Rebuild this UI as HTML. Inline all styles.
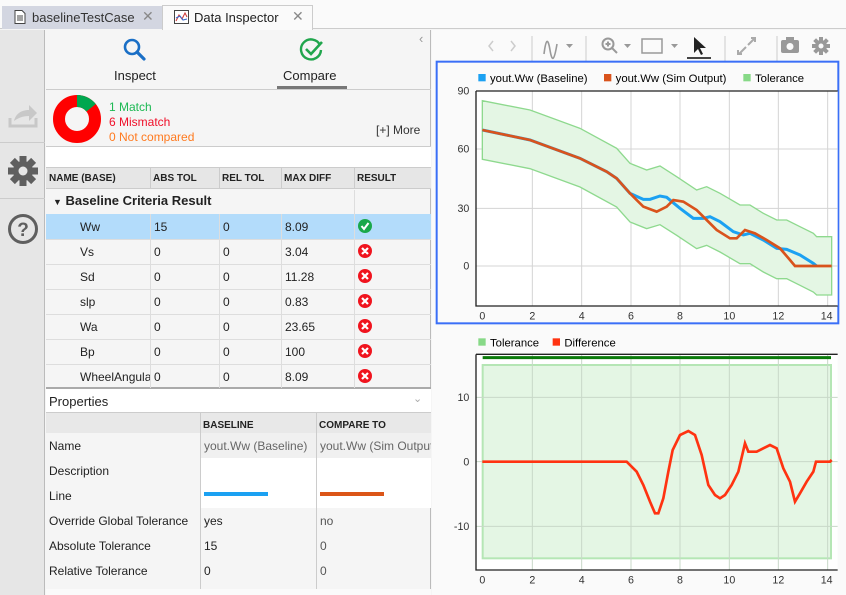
<!DOCTYPE html>
<html><head><meta charset="utf-8"><style>
*{box-sizing:border-box;margin:0;padding:0}
body{width:846px;height:595px;overflow:hidden;background:#f5f5f5;font-family:"Liberation Sans",Arial,sans-serif;font-size:12px;color:#222;position:relative}
.a{position:absolute}
.tb{top:0;left:0;width:846px;height:29px;background:#fafafa;border-bottom:1px solid #ccc}
.c{position:absolute;white-space:nowrap;overflow:hidden}
</style></head><body>
<div class="a tb"></div>
<div class="a" style="left:2px;top:6px;width:160px;height:23px;background:#d3d6e1"></div>
<div class="a" style="left:162px;top:5px;width:151px;height:25px;background:#fafafa;border:1px solid #ccc;border-bottom:none"></div>
<svg class="a" style="left:14px;top:10px" width="12" height="14"><path d="M1 .5h7l3 3v10H1z" fill="#fff" stroke="#444"/><path d="M3 6h6M3 8h6M3 10h6" stroke="#444"/></svg>
<div class="a" style="left:32px;top:10px;font-size:13px;color:#333">baselineTestCase</div>
<div class="a" style="left:142px;top:8px;font-size:14px;color:#888">✕</div>
<svg class="a" style="left:174px;top:10px" width="15" height="14"><rect x=".5" y=".5" width="14" height="13" fill="#fff" stroke="#444"/><path d="M2 11 5 5 8 9 11 3 13 7" fill="none" stroke="#c33"/><path d="M2 8 6 6 9 10 13 9" fill="none" stroke="#36c"/></svg>
<div class="a" style="left:194px;top:10px;font-size:13px;color:#222">Data Inspector</div>
<div class="a" style="left:292px;top:8px;font-size:14px;color:#888">✕</div>

<!-- left strip -->
<div class="a" style="left:0;top:30px;width:45px;height:565px;background:#e6e6e6;border-right:1px solid #bbb"></div>
<div class="a" style="left:0;top:142px;width:45px;height:1px;background:#ccc"></div>
<div class="a" style="left:0;top:198px;width:45px;height:1px;background:#ccc"></div>
<svg class="a" style="left:8px;top:101px" width="32" height="28"><path d="M2 17v8h26v-8" fill="none" stroke="#c8c8c8" stroke-width="3"/><path d="M6 20c2-8 8-11 15-11V4l8 8-8 8v-5c-6 0-11 2-15 5z" fill="#c8c8c8"/></svg>
<svg class="a" style="left:7px;top:155px" width="32" height="32" viewBox="-16 -16 32 32"><g fill="#5f5f5f"><circle r="10"/><rect x="-3.5" y="-15" width="7" height="30"/><rect x="-3.5" y="-15" width="7" height="30" transform="rotate(45)"/><rect x="-3.5" y="-15" width="7" height="30" transform="rotate(90)"/><rect x="-3.5" y="-15" width="7" height="30" transform="rotate(135)"/></g><circle r="4.5" fill="#e6e6e6"/></svg>
<svg class="a" style="left:7px;top:213px" width="32" height="32"><circle cx="16" cy="16" r="13.5" fill="none" stroke="#5f5f5f" stroke-width="3"/><text x="16" y="23" text-anchor="middle" font-size="19" font-weight="bold" fill="#5f5f5f" font-family="Liberation Sans">?</text></svg>

<!-- main left panel -->
<div class="a" style="left:46px;top:30px;width:385px;height:565px;background:#f5f5f5;border-right:1px solid #bbb"></div>
<div class="a" style="left:419px;top:31px;color:#999;font-size:13px">‹</div>
<svg class="a" style="left:122px;top:37px" width="26" height="26"><circle cx="10" cy="10" r="7" fill="none" stroke="#1a6fc6" stroke-width="2.6"/><path d="M15 15l7 7" stroke="#1a6fc6" stroke-width="3.2" stroke-linecap="round"/></svg>
<div class="a" style="left:114px;top:68px;font-size:13px">Inspect</div>
<svg class="a" style="left:299px;top:37px" width="26" height="26"><path d="M21 8A10 10 0 1 0 22 13" fill="none" stroke="#21a64d" stroke-width="2.4"/><path d="M7 12l5 5 11-12" fill="none" stroke="#21a64d" stroke-width="2.6"/></svg>
<div class="a" style="left:283px;top:68px;font-size:13px">Compare</div>
<div class="a" style="left:277px;top:86px;width:70px;height:3px;background:#777"></div>
<div class="a" style="left:46px;top:89px;width:385px;height:1px;background:#ccc"></div>
<svg class="a" style="left:53px;top:95px" width="48" height="48" viewBox="-24 -24 48 48"><circle r="18" fill="none" stroke="#f00" stroke-width="12"/><path d="M0-24A24 24 0 0 1 18.8-15V-15L9.4-7.5A12 12 0 0 0 0-12z" fill="#00a74f"/></svg>
<div class="a" style="left:109px;top:100px;color:#1db954">1 Match</div>
<div class="a" style="left:109px;top:115px;color:#f0102a">6 Mismatch</div>
<div class="a" style="left:109px;top:130px;color:#ff7a1f">0 Not compared</div>
<div class="a" style="left:376px;top:123px;color:#333">[+] More</div>
<div class="a" style="left:46px;top:146px;width:385px;height:22px;background:#fff;border-top:1px solid #ccc;border-bottom:1px solid #ccc"></div>
<div class="a" style="left:46px;top:168px;width:385px;height:21px;background:#e6e6e6;border-bottom:1px solid #ccc;font-size:10px;font-weight:bold;color:#222">
<div class="c" style="left:3px;top:5px">NAME (BASE)</div><div class="c" style="left:107px;top:5px">ABS TOL</div><div class="c" style="left:176px;top:5px">REL TOL</div><div class="c" style="left:238px;top:5px">MAX DIFF</div><div class="c" style="left:311px;top:5px">RESULT</div>
<div class="a" style="left:104px;top:0;width:1px;height:21px;background:#ccc"></div><div class="a" style="left:173px;top:0;width:1px;height:21px;background:#ccc"></div><div class="a" style="left:235px;top:0;width:1px;height:21px;background:#ccc"></div><div class="a" style="left:308px;top:0;width:1px;height:21px;background:#ccc"></div>
</div>
<div class="a" style="left:53px;top:193px;font-size:13px;font-weight:bold;color:#222"><span style="font-size:9px">▼</span> Baseline Criteria Result</div>
<div class="a" style="left:354px;top:190px;width:1px;height:24px;background:#ddd"></div>
<div id="rows"></div>
<div class="a" style="left:46px;top:387px;width:385px;height:2px;background:#aaa"></div>
<div class="a" style="left:46px;top:389px;width:385px;height:24px;background:#fff;border-bottom:1px solid #ccc"></div>
<div class="a" style="left:49px;top:394px;font-size:13px;color:#222">Properties</div>
<div class="a" style="left:413px;top:392px;color:#aaa;font-size:11px">⌄</div>
<div class="a" style="left:46px;top:413px;width:385px;height:20px;background:#e8e8e8"></div>
<div class="a" style="left:203px;top:420px;font-size:10px;font-weight:bold">BASELINE</div>
<div class="a" style="left:319px;top:420px;font-size:10px;font-weight:bold">COMPARE TO</div>
<div class="a" style="left:200px;top:433px;width:231px;height:25px;background:#f0f0f0"></div>
<div class="a" style="left:200px;top:458px;width:231px;height:50px;background:#fff"></div>
<div class="a" style="left:200px;top:413px;width:1px;height:182px;background:#ccc"></div>
<div class="a" style="left:316px;top:413px;width:1px;height:182px;background:#ccc"></div>
<div class="a" style="left:49px;top:439px">Name</div><div class="a" style="left:204px;top:439px;color:#666">yout.Ww (Baseline)</div><div class="c" style="left:320px;top:439px;width:111px;color:#666">yout.Ww (Sim Output)</div>
<div class="a" style="left:49px;top:464px">Description</div>
<div class="a" style="left:49px;top:489px">Line</div>
<div class="a" style="left:204px;top:492px;width:64px;height:4px;background:#1ba1f2"></div>
<div class="a" style="left:320px;top:492px;width:64px;height:4px;background:#db5518"></div>
<div class="a" style="left:49px;top:514px">Override Global Tolerance</div><div class="a" style="left:204px;top:514px">yes</div><div class="a" style="left:320px;top:514px;color:#555">no</div>
<div class="a" style="left:49px;top:539px">Absolute Tolerance</div><div class="a" style="left:204px;top:539px">15</div><div class="a" style="left:320px;top:539px;color:#555">0</div>
<div class="a" style="left:49px;top:564px">Relative Tolerance</div><div class="a" style="left:204px;top:564px">0</div><div class="a" style="left:320px;top:564px;color:#555">0</div>
<div class="a" style="left:46px;top:589px;width:385px;height:6px;background:#fafafa"></div>

<!-- right toolbar -->
<div class="a" style="left:432px;top:30px;width:414px;height:565px;background:#fafafa"></div>
<svg class="a" style="left:432px;top:30px" width="414" height="32" font-family="Liberation Sans">
<path d="M61 11l-4 5 4 5M79 11l4 5-4 5" fill="none" stroke="#ccc" stroke-width="1.5"/>
<path d="M100 6v26M154 6v26M293 6v26M345 6v26" stroke="#ccc"/>
<path d="M112 24c2-16 4-16 6-4s4 12 7-6" fill="none" stroke="#999" stroke-width="1.6"/><path d="M134 14h7l-3.5 4z" fill="#999"/>
<circle cx="176" cy="14" r="5.5" fill="none" stroke="#999" stroke-width="2"/><path d="M180 18l5 5M173.5 14h5M176 11.5v5" stroke="#999" stroke-width="2"/><path d="M192 14h7l-3.5 4z" fill="#999"/>
<rect x="210" y="9" width="20" height="14" fill="none" stroke="#999" stroke-width="1.5"/><path d="M239 14h7l-3.5 4z" fill="#999"/>
<path d="M262 7v16l4-4 3 6 2-1-3-6h6z" fill="#222"/><rect x="255" y="27" width="24" height="2" fill="#444"/>
<path d="M307 24l7-7M310 24h-4v-4M323 8l-7 7M319 8h4v4" fill="none" stroke="#aaa" stroke-width="2"/>
<rect x="349" y="10" width="18" height="13" rx="2" fill="#999"/><rect x="354" y="7" width="8" height="4" fill="#999"/><circle cx="358" cy="16.5" r="3.5" fill="#fafafa"/>
<g transform="translate(389,16)" fill="#999"><circle r="6"/><rect x="-2" y="-9" width="4" height="18"/><rect x="-2" y="-9" width="4" height="18" transform="rotate(45)"/><rect x="-2" y="-9" width="4" height="18" transform="rotate(90)"/><rect x="-2" y="-9" width="4" height="18" transform="rotate(135)"/><circle r="2.5" fill="#fafafa"/></g>
</svg>

<!-- plots -->
<svg class="a" style="left:0;top:0" width="846" height="595">
<g transform="translate(430,60) scale(0.33333)" font-family="Liberation Sans" font-size="32">
<rect x="20" y="5" width="1205" height="785" fill="#fafafa" stroke="#3a6ff7" stroke-width="6"/>
<rect x="138" y="93" width="1085" height="645" fill="#fff"/>
<g stroke="#d4d4d4" stroke-width="3"><path d="M307 93v645M455 93v645M603 93v645M750 93v645M898 93v645M1045 93v645M1193 93v645M138 267h1085M138 445h1085M138 618h1085"/></g>
<path d="M157 122L300 150L450 205L560 265L600 310L650 330L690 318L740 350L800 390L830 380L870 400L930 435L960 435L1000 460L1040 480L1070 480L1110 500L1150 520L1160 530L1205 530L1205 705L1160 705L1150 696L1110 676L1070 656L1040 656L1000 636L960 611L930 611L870 576L830 556L800 566L740 526L690 494L650 506L600 486L560 441L450 381L300 326L157 298Z" fill="#e4f6e4" stroke="#8ed98e" stroke-width="4"/>
<path d="M157 210L300 240L450 295L530 335L560 355L600 400L640 418L660 418L690 408L710 412L750 445L790 475L820 475L840 470L870 485L910 515L940 525L960 520L1000 540L1040 565L1070 568L1110 585L1150 610L1160 618" fill="none" stroke="#1ba1f2" stroke-width="9"/>
<path d="M157 210L300 240L450 295L530 335L560 355L600 400L640 440L680 455L710 440L730 420L760 425L800 450L830 480L860 510L900 535L920 535L945 510L975 520L1010 540L1050 565L1080 600L1095 618L1205 618" fill="none" stroke="#d9531c" stroke-width="8"/>
<path d="M138 93v645h1085M138 93h1085" fill="none" stroke="#222" stroke-width="4"/>
<g text-anchor="end" fill="#333"><text x="118" y="104">90</text><text x="118" y="278">60</text><text x="118" y="456">30</text><text x="118" y="629">0</text></g>
<g text-anchor="middle" fill="#333"><text x="157" y="778">0</text><text x="307" y="778">2</text><text x="455" y="778">4</text><text x="603" y="778">6</text><text x="750" y="778">8</text><text x="898" y="778">10</text><text x="1045" y="778">12</text><text x="1190" y="778">14</text></g>
<rect x="145" y="42" width="22" height="22" fill="#1ba1f2"/><text x="180" y="66" font-size="34">yout.Ww (Baseline)</text>
<rect x="522" y="42" width="22" height="22" fill="#d9531c"/><text x="557" y="66" font-size="34">yout.Ww (Sim Output)</text>
<rect x="940" y="42" width="22" height="22" fill="#87d987"/><text x="975" y="66" font-size="34">Tolerance</text>
</g>
<g transform="translate(430,325) scale(0.33333)" font-family="Liberation Sans" font-size="32">
<rect x="138" y="88" width="1085" height="647" fill="#fff"/>
<rect x="158" y="120" width="1045" height="580" fill="#e4f6e4" stroke="#b5e6b5" stroke-width="6"/>
<g stroke="#c8d8c8" stroke-width="3"><path d="M307 88v647M455 88v647M603 88v647M750 88v647M898 88v647M1045 88v647M1193 88v647M138 217h1085M138 410h1085M138 604h1085"/></g>
<path d="M158 98H1203" stroke="#0a7a0a" stroke-width="9"/>
<path d="M157 410L590 410L620 440L640 480L660 530L675 565L685 565L700 520L715 440L728 375L750 330L775 318L795 330L815 390L835 480L855 510L870 520L885 510L905 480L925 440L945 355L955 380L980 380L1000 370L1020 360L1040 370L1060 430L1080 470L1095 530L1110 505L1130 470L1150 440L1158 410L1200 410L1205 405" fill="none" stroke="#ff3311" stroke-width="8"/>
<path d="M138 88v647h1085M138 88h1085" fill="none" stroke="#222" stroke-width="4"/>
<g text-anchor="end" fill="#333"><text x="118" y="228">10</text><text x="118" y="421">0</text><text x="118" y="615">-10</text></g>
<g text-anchor="middle" fill="#333"><text x="157" y="775">0</text><text x="307" y="775">2</text><text x="455" y="775">4</text><text x="603" y="775">6</text><text x="750" y="775">8</text><text x="898" y="775">10</text><text x="1045" y="775">12</text><text x="1190" y="775">14</text></g>
<rect x="145" y="40" width="22" height="22" fill="#87d987"/><text x="180" y="64" font-size="34">Tolerance</text>
<rect x="368" y="40" width="22" height="22" fill="#ff3311"/><text x="403" y="64" font-size="34">Difference</text>
</g>
</svg>

<!-- table rows -->
<div class="a" style="left:46px;top:214px;width:385px;height:174px;font-size:12px">
<div class="a" style="left:0;top:0;width:385px;height:25px;background:#b3dcfb"></div>
<div class="a" style="left:0;top:25px;width:385px;height:1px;background:#ddd"></div><div class="a" style="left:0;top:50px;width:385px;height:1px;background:#ddd"></div><div class="a" style="left:0;top:75px;width:385px;height:1px;background:#ddd"></div><div class="a" style="left:0;top:100px;width:385px;height:1px;background:#ddd"></div><div class="a" style="left:0;top:125px;width:385px;height:1px;background:#ddd"></div><div class="a" style="left:0;top:150px;width:385px;height:1px;background:#ddd"></div>
<div class="a" style="left:104px;top:0;width:1px;height:174px;background:#ddd"></div><div class="a" style="left:173px;top:0;width:1px;height:174px;background:#ddd"></div><div class="a" style="left:235px;top:0;width:1px;height:174px;background:#ddd"></div><div class="a" style="left:308px;top:0;width:1px;height:174px;background:#ddd"></div>
<div class="c" style="left:34px;top:6px">Ww</div><div class="c" style="left:108px;top:6px">15</div><div class="c" style="left:177px;top:6px">0</div><div class="c" style="left:239px;top:6px">8.09</div>
<div class="c" style="left:34px;top:31px">Vs</div><div class="c" style="left:108px;top:31px">0</div><div class="c" style="left:177px;top:31px">0</div><div class="c" style="left:239px;top:31px">3.04</div>
<div class="c" style="left:34px;top:56px">Sd</div><div class="c" style="left:108px;top:56px">0</div><div class="c" style="left:177px;top:56px">0</div><div class="c" style="left:239px;top:56px">11.28</div>
<div class="c" style="left:34px;top:81px">slp</div><div class="c" style="left:108px;top:81px">0</div><div class="c" style="left:177px;top:81px">0</div><div class="c" style="left:239px;top:81px">0.83</div>
<div class="c" style="left:34px;top:106px">Wa</div><div class="c" style="left:108px;top:106px">0</div><div class="c" style="left:177px;top:106px">0</div><div class="c" style="left:239px;top:106px">23.65</div>
<div class="c" style="left:34px;top:131px">Bp</div><div class="c" style="left:108px;top:131px">0</div><div class="c" style="left:177px;top:131px">0</div><div class="c" style="left:239px;top:131px">100</div>
<div class="c" style="left:34px;top:156px;width:70px">WheelAngular</div><div class="c" style="left:108px;top:156px">0</div><div class="c" style="left:177px;top:156px">0</div><div class="c" style="left:239px;top:156px">8.09</div>
<svg class="a" style="left:311px;top:0" width="16" height="174">
<circle cx="8" cy="12" r="7" fill="#1aa84a"/><path d="M4.5 12l2.5 3 4.5-6" fill="none" stroke="#fff" stroke-width="2"/>
<g fill="#f0141e"><circle cx="8" cy="37" r="7"/><circle cx="8" cy="62" r="7"/><circle cx="8" cy="87" r="7"/><circle cx="8" cy="112" r="7"/><circle cx="8" cy="137" r="7"/><circle cx="8" cy="162" r="7"/></g>
<g stroke="#fff" stroke-width="2.2"><path d="M5 34l6 6M11 34l-6 6M5 59l6 6M11 59l-6 6M5 84l6 6M11 84l-6 6M5 109l6 6M11 109l-6 6M5 134l6 6M11 134l-6 6M5 159l6 6M11 159l-6 6"/></g>
</svg>
</div>
</body></html>
